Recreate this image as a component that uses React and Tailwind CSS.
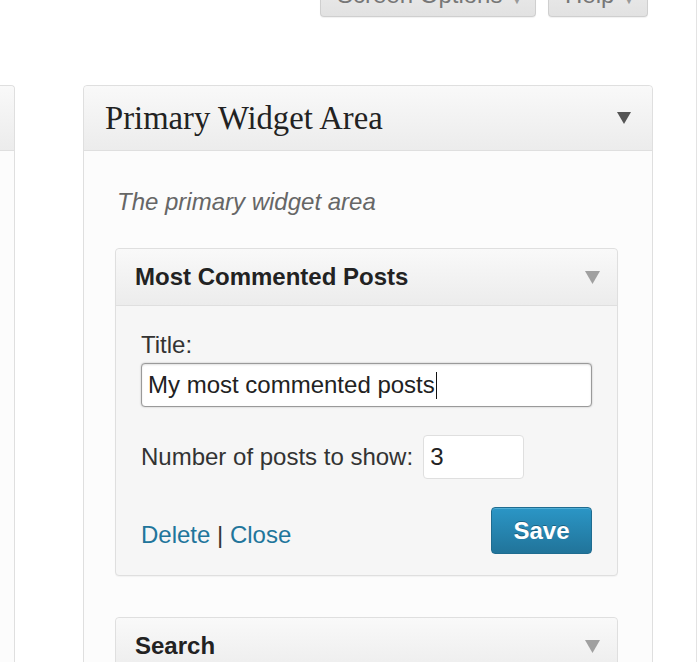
export default function App() {
  const Tri = ({ color, w = 14, h = 12 }) => (
    <svg width={w} height={h} viewBox="0 0 14 12" className="shrink-0">
      <polygon points="0,0 14,0 7,12" fill={color} />
    </svg>
  );
  return (
    <div className="w-[700px] h-[662px] overflow-hidden bg-white font-['Liberation_Sans',Arial,sans-serif]">
      <div className="w-[697px] h-full border-r border-[#e3e3e3]">
        {/* top screen-meta buttons */}
        <div className="flex justify-end gap-[12px] pr-[48px] h-[85px] items-start">
          <div className="w-[216px] h-[38px] -mt-[21px] pt-[4px] pl-[16px] pr-[12px] flex items-start justify-between border border-t-0 border-[#cfcfcf] rounded-b-[4px] bg-gradient-to-b from-[#ececec] to-[#e2e2e2] shadow-[0_1px_1px_rgba(0,0,0,0.06)] text-[24px] leading-[24px] text-[#777]">
            <span>Screen Options</span>
            <span className="text-[12px] mt-[5px] text-[#999]">▼</span>
          </div>
          <div className="w-[100px] h-[38px] -mt-[21px] pt-[4px] pl-[16px] pr-[12px] flex items-start justify-between border border-t-0 border-[#cfcfcf] rounded-b-[4px] bg-gradient-to-b from-[#ececec] to-[#e2e2e2] shadow-[0_1px_1px_rgba(0,0,0,0.06)] text-[24px] leading-[24px] text-[#777]">
            <span>Help</span>
            <span className="text-[12px] mt-[5px] text-[#999]">▼</span>
          </div>
        </div>

        <div className="flex items-start">
          {/* left panel edge */}
          <div className="w-[15px] h-[600px] border-t border-r border-[#dfdfdf] rounded-tr-[4px] bg-[#fcfcfc]">
            <div className="h-[65px] border-b border-[#dfdfdf] bg-gradient-to-b from-[#f9f9f9] to-[#ececec] rounded-tr-[4px]" />
          </div>

          {/* primary widget area */}
          <div className="ml-[68px] w-[570px] h-[600px] border border-[#dfdfdf] rounded-t-[4px] bg-[#fcfcfc]">
            <div className="h-[65px] border-b border-[#dfdfdf] bg-gradient-to-b from-[#f9f9f9] to-[#ececec] rounded-t-[4px] flex items-center justify-between pl-[21px] pr-[21px]">
              <span className="font-['Liberation_Serif',Georgia,serif] text-[32.7px] leading-[32px] text-[#222]">
                Primary Widget Area
              </span>
              <Tri color="#555" />
            </div>

            <div className="pt-[39px] pl-[31px]">
              <p className="ml-[2px] italic text-[24px] leading-[24px] text-[#666]">The primary widget area</p>

              {/* Most Commented Posts widget */}
              <div className="mt-[34px] w-[503px] border border-[#dfdfdf] rounded-[4px] bg-[#f6f6f6] shadow-[0_1px_1px_rgba(0,0,0,0.04)]">
                <div className="h-[57px] border-b border-[#dfdfdf] bg-gradient-to-b from-[#f9f9f9] to-[#ececec] rounded-t-[4px] flex items-center justify-between pl-[19px] pr-[17px]">
                  <span className="font-bold text-[24px] leading-[24px] text-[#222]">Most Commented Posts</span>
                  <Tri color="#a0a0a0" w={15} h={13} />
                </div>
                <div className="pt-[27px] pb-[21px] px-[25px] text-[#333]">
                  <div className="text-[24px] leading-[24px]">Title:</div>
                  <div className="mt-[6px] h-[44px] w-[451px] border border-[#9a9a9a] rounded-[4px] bg-white shadow-[inset_0_1px_2px_rgba(0,0,0,0.12),0_0_2px_rgba(0,0,0,0.25)] flex items-center pl-[6px]">
                    <span className="text-[24px] leading-[24px] text-[#222]">My most commented posts</span>
                    <span className="w-[1.5px] h-[27px] bg-[#111] ml-[1px]" />
                  </div>
                  <div className="mt-[28px] flex items-center">
                    <span className="text-[24px] leading-[24px]">Number of posts to show:</span>
                    <div className="ml-[10px] h-[44px] w-[101px] border border-[#dfdfdf] rounded-[4px] bg-white flex items-center pl-[6px]">
                      <span className="text-[24px] leading-[24px] text-[#222]">3</span>
                    </div>
                  </div>
                  <div className="mt-[28px] flex items-center justify-between">
                    <div className="pt-[8px] text-[24px] leading-[24px]">
                      <span className="text-[#21759b]">Delete</span>
                      <span className="text-[#333]"> | </span>
                      <span className="text-[#21759b]">Close</span>
                    </div>
                    <div className="h-[47px] w-[101px] border border-[#1f6c90] rounded-[4px] bg-gradient-to-b from-[#2b96c6] to-[#21749a] shadow-[inset_0_1px_0_rgba(120,200,230,0.5)] flex items-center justify-center">
                      <span className="font-bold text-[24px] leading-[24px] text-white [text-shadow:0_-1px_0_rgba(0,0,0,0.3)]">Save</span>
                    </div>
                  </div>
                </div>
              </div>

              {/* Search widget */}
              <div className="mt-[41px] w-[503px] border border-[#dfdfdf] rounded-[4px] bg-[#f6f6f6]">
                <div className="h-[57px] border-b border-[#dfdfdf] bg-gradient-to-b from-[#f9f9f9] to-[#ececec] rounded-t-[4px] flex items-center justify-between pl-[19px] pr-[17px]">
                  <span className="font-bold text-[24px] leading-[24px] text-[#222]">Search</span>
                  <Tri color="#a0a0a0" w={15} h={13} />
                </div>
              </div>
            </div>
          </div>
        </div>
      </div>
    </div>
  );
}
